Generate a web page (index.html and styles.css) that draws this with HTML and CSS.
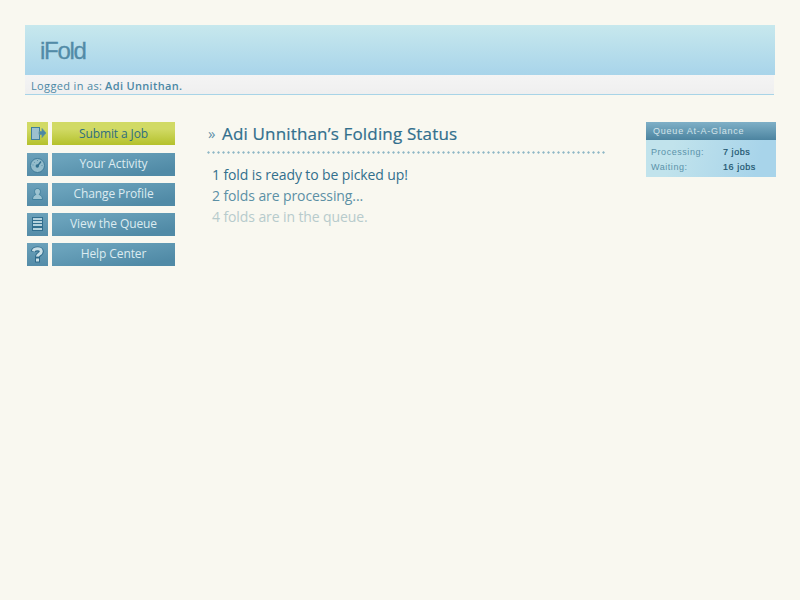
FILE: index.html
```html
<!DOCTYPE html>
<html lang="en">
<head>
<meta charset="utf-8">
<title>iFold</title>
<link rel="stylesheet" href="styles.css">
</head>
<body>
<header class="header"><h1 class="logo">iFold</h1></header>
<div class="login"><span class="login-label">Logged in as:</span> <b class="login-name">Adi Unnithan.</b></div>
<div class="columns">
  <nav class="menu">
    <a class="item active"><span class="icon"><svg width="21" height="23" viewBox="0 0 21 23"><rect x="4.500" y="5.500" width="8" height="12" fill="#9cc0cf" stroke="#3f7f9c"/><path d="M12 9.500h3V6.500l4 4.500-4 4.500v-3h-3z" fill="#4c88a3" stroke="#5d939c" stroke-width=".8"/></svg></span><span class="label">Submit a Job</span></a>
    <a class="item"><span class="icon"><svg width="21" height="23" viewBox="0 0 21 23"><circle cx="10.500" cy="12.500" r="7" fill="#93bccb" stroke="#3f7b98"/><path d="M10.500 13l3.500-4.500" stroke="#316f8d" stroke-width="1.300"/><circle cx="10.300" cy="13" r="1.700" fill="#316f8d"/><path d="M5.500 12h1M10.500 7v1M14.500 12.500h1M7 9l.7.700" stroke="#5990a9"/></svg></span><span class="label">Your Activity</span></a>
    <a class="item"><span class="icon"><svg width="21" height="23" viewBox="0 0 21 23"><path d="M8.800 11.500C6.500 9 7.500 5.500 10.500 5.500S14.500 9 12.200 11.500c2 .8 3.300 2.500 3.300 5h-10c0-2.500 1.300-4.200 3.300-5z" fill="#9cc3d1" stroke="#40809d"/></svg></span><span class="label">Change Profile</span></a>
    <a class="item"><span class="icon"><svg width="21" height="23" viewBox="0 0 21 23"><rect x="5" y="4" width="11" height="14" fill="#326f8f"/><path d="M6 6h9M6 9h9M6 12h9M6 16h9" stroke="#b4d2dd" stroke-width="2"/></svg></span><span class="label">View the Queue</span></a>
    <a class="item"><span class="icon"><svg width="21" height="23" viewBox="0 0 21 23" fill="none"><path d="M6.200 8.700C7 5 14.300 5 14.300 8.500c0 2.700-3.800 2.500-3.800 5.500M10.500 14v5.500" stroke="#306b8b" stroke-width="5"/><path d="M6.200 8.200C7.500 5 14.300 5 14.300 8.500c0 2.700-3.800 2.500-3.800 5.300M10.500 15.500v3" stroke="#c9dfe6" stroke-width="3"/><path d="M8.500 14.300h4" stroke="#306b8b"/></svg></span><span class="label">Help Center</span></a>
  </nav>
  <main class="main">
    <h2 class="title"><span class="raquo">»</span><span class="title-text">Adi Unnithan’s Folding Status</span></h2>
    <div class="dots"></div>
    <p class="line ready">1 fold is ready to be picked up!</p>
    <p class="line processing">2 folds are processing...</p>
    <p class="line queued">4 folds are in the queue.</p>
  </main>
  <aside class="glance">
    <h3 class="glance-title">Queue At-A-Glance</h3>
    <dl class="stats">
      <dt>Processing:</dt><dd>7 jobs</dd>
      <dt>Waiting:</dt><dd>16 jobs</dd>
    </dl>
  </aside>
</div>
</body>
</html>
```
FILE: styles.css
```css
* { box-sizing: border-box; }
body { margin: 0; padding: 25px 24px 0 25px; background: #f9f8f0; font-family: "Trebuchet MS", "Open Sans", sans-serif; color: #326f8d; }
h1, h2, h3, p, dl, dd { margin: 0; font-weight: normal; }
span, b, h3, dt, dd { white-space: nowrap; }
.header { width: 750px; height: 50px; padding-left: 15px; background: linear-gradient(#c7e8ed, #a8d4ea); }
.logo { font: 24px/52px "Liberation Sans", sans-serif; letter-spacing: -1.3px; color: #528ba7; -webkit-text-stroke: .3px #528ba7; }
.login { width: 749px; height: 20px; padding-left: 6px; border-bottom: 1px solid #a8d4e7; background: linear-gradient(#f4f4f4, #efefef); font-size: 11px; line-height: 22px; color: #4c88a5; }
.login-label { letter-spacing: .35px; }
.login-name { font-weight: 600; letter-spacing: .33px; }
.columns { display: flex; align-items: flex-start; padding: 27px 0 0 2px; }
.menu { display: flex; flex-direction: column; gap: 7px; width: 148px; }
.item { display: flex; gap: 4px; height: 23px; color: #dcebf0; }
.active { margin-bottom: 1px; color: #2f6e7f; }
.icon { width: 21px; background: linear-gradient(#6ba1ba, #548ca8); }
.icon svg { display: block; }
.label { width: 123px; text-align: center; font-size: 12px; line-height: 22px; letter-spacing: -.1px; background: linear-gradient(170deg, #6ba3bc 15%, #508aa6 85%); }
.active .icon, .active .label { background: linear-gradient(#d1da65 30%, #b4c12c); }
.active .label { line-height: 24px; }
.main { width: 398px; margin-left: 32px; }
.title { display: flex; height: 29px; font-size: 17px; line-height: 23px; }
.title-text { letter-spacing: .16px; -webkit-text-stroke: .2px #326f8d; }
.raquo { width: 15px; padding-left: 1px; font-size: 15px; color: #5f91a8; }
.dots { height: 3px; margin-bottom: 10px; background: radial-gradient(circle at 1.500px 1.500px, #8fb7c5 .8px, transparent 1.500px) 0 0 / 5px 3px repeat-x; }
.line { height: 21px; padding-left: 5px; font-size: 14px; line-height: 21px; letter-spacing: -.1px; }
.processing { color: #5c90a5; }
.queued { color: #b7cbcc; }
.glance { width: 130px; margin-left: 41px; font-family: "Liberation Sans", sans-serif; }
.glance-title { height: 18px; padding-left: 7px; font-size: 9px; line-height: 18px; letter-spacing: .78px; color: #d3e4ea; background: linear-gradient(#7fb0c7, #4c84a0); }
.stats { display: grid; grid-template-columns: 72px 1fr; grid-auto-rows: 15px; height: 37px; padding: 5px 0 0 5px; font-size: 9px; line-height: 15px; letter-spacing: .55px; color: #5b92aa; background: linear-gradient(105deg, #c1e3ec 20%, #a8d4ea 85%); }
.stats dd { color: #20556f; -webkit-text-stroke: .2px #20556f; }
```
